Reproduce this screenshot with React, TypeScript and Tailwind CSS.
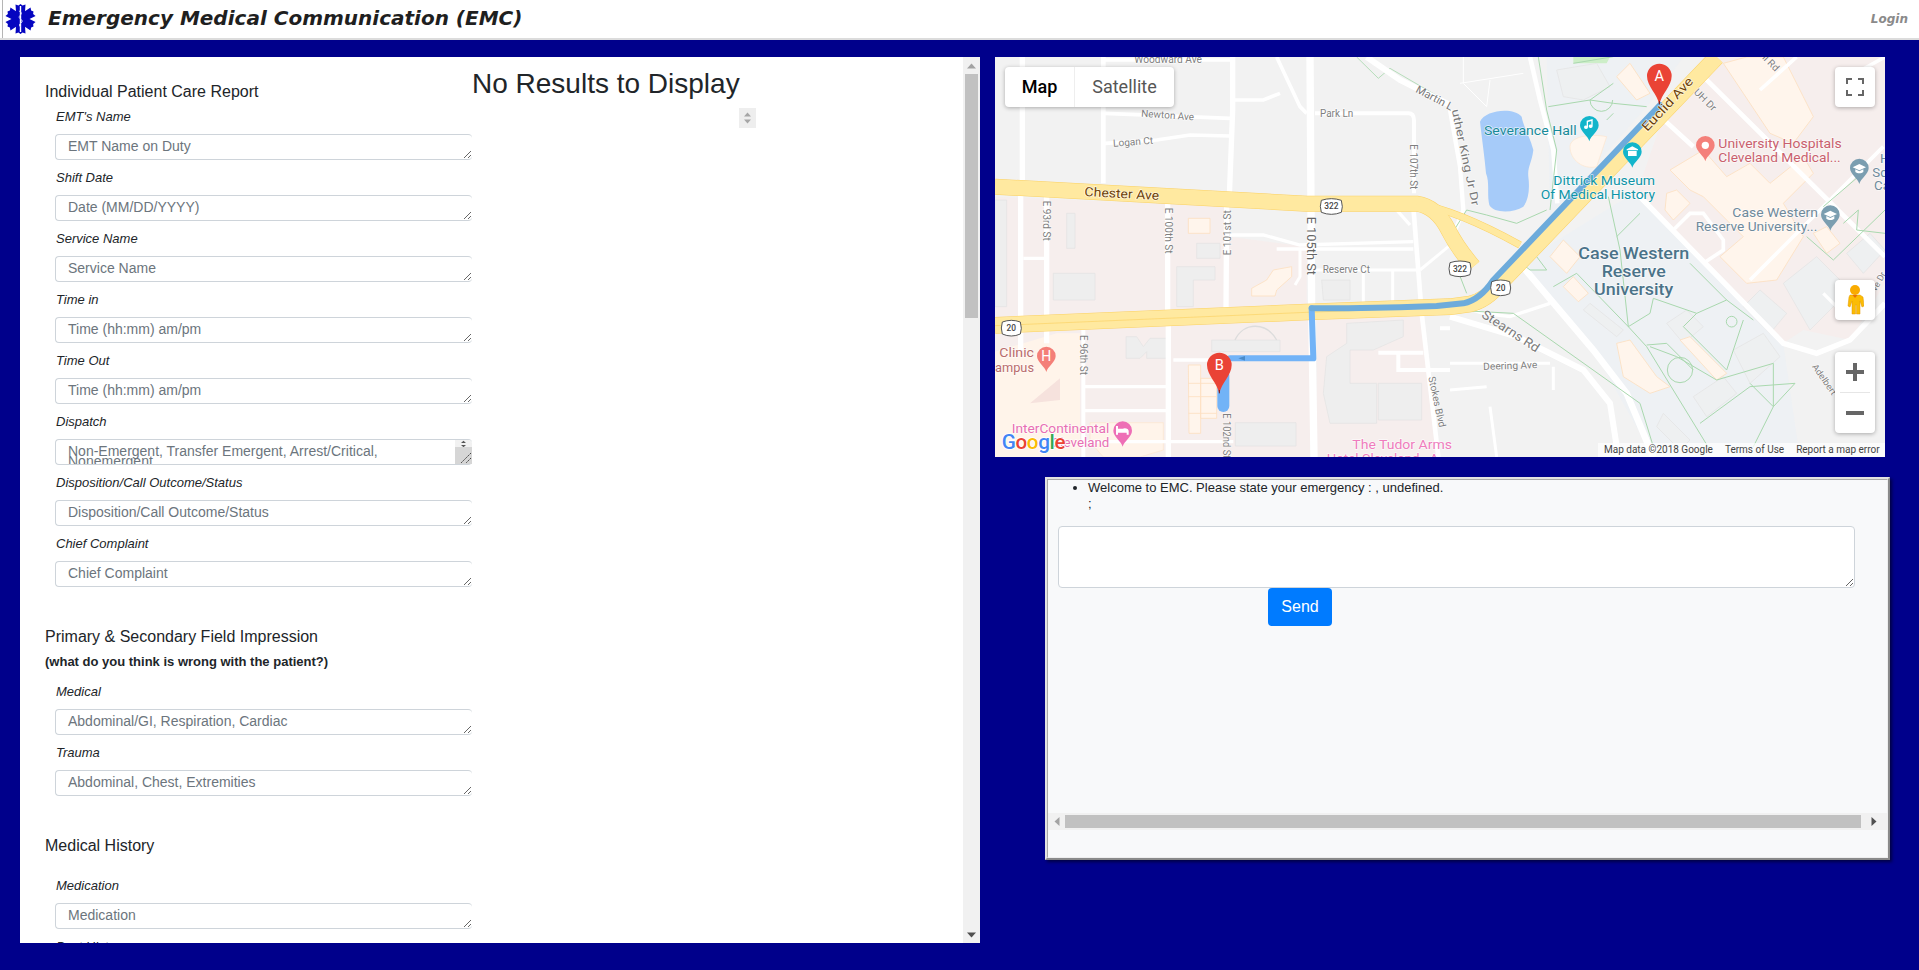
import type { ReactNode } from "react";

const fieldsTop = [
  { label: "EMT's Name", hint: "EMT Name on Duty" },
  { label: "Shift Date", hint: "Date (MM/DD/YYYY)" },
  { label: "Service Name", hint: "Service Name" },
  { label: "Time in", hint: "Time (hh:mm) am/pm" },
  { label: "Time Out", hint: "Time (hh:mm) am/pm" },
];

const fieldsBottom = [
  { label: "Disposition/Call Outcome/Status", hint: "Disposition/Call Outcome/Status" },
  { label: "Chief Complaint", hint: "Chief Complaint" },
];

function Label({ children }: { children: ReactNode }) {
  return <div className="h-[18px] mb-2 ml-px text-[13px] leading-[18px] italic text-[#212529]">{children}</div>;
}

function Field({ label, hint }: { label: string; hint: string }) {
  return (
    <div className="mb-[9px]">
      <Label>{label}</Label>
      <textarea
        rows={1}
        placeholder={hint}
        className="block w-[417px] h-[26px] py-1.5 px-3 text-sm leading-[10px] bg-white border border-r-0 border-[#ced4da] rounded placeholder:text-[#6c757d] outline-none"
      />
    </div>
  );
}

function DispatchField() {
  return (
    <div className="mb-[9px]">
      <Label>Dispatch</Label>
      <div className="relative w-[417px] h-[26px]">
        <textarea
          rows={1}
          placeholder={"Non-Emergent, Transfer Emergent, Arrest/Critical,\nNonemergent"}
          className="block w-full h-full py-1.5 px-3 text-sm leading-[10px] bg-white border border-r-0 border-[#ced4da] rounded placeholder:text-[#6c757d] outline-none overflow-hidden resize-none"
        />
        <div className="absolute right-0 top-px bottom-px w-[17px] flex flex-col bg-[#f1f1f1] rounded-r">
          <div className="h-[7px] text-center">
            <svg width="17" height="8" viewBox="0 0 17 8"><path d="M6 3 8.5 0.8 11 3zM6 5 8.5 7.2 11 5z" fill="#555" /></svg>
          </div>
          <div className="relative flex-1 bg-[#d6d6d6]">
            <svg className="absolute right-0 bottom-0" width="14" height="14" viewBox="0 0 14 14">
              <path d="M13 3 3 13M13 8 8 13" stroke="#444" strokeWidth="1" strokeDasharray="2 1" fill="none" />
            </svg>
          </div>
        </div>
      </div>
    </div>
  );
}

function StarOfLife() {
  return (
    <svg width="33" height="32" viewBox="0 0 32 32" className="shrink-0">
      {[0, 60, 120].map((a) => (
        <path key={a} transform={`rotate(${a} 16 16)`} d="M12 16 11 1.500 14 2.600 16 1 18 2.600 21 1.500 20 16 21 30.500 18 29.400 16 31 14 29.400 11 30.500z" fill="#0505c0" />
      ))}
      <path d="M16 3v26" stroke="#fff" strokeWidth="1.400" />
      <path d="M14.400 8c2.800 1 3 3 1.600 4s-2 3 0 4 2.200 3 .4 4-1.800 3-.2 4" stroke="#dfe3ff" strokeWidth="1" fill="none" />
    </svg>
  );
}

function Txt({ x, y, s = 30, c = "#7f7f7f", w = 400, r, a, t, len }: { x: number; y: number; s?: number; c?: string; w?: number; r?: number; a?: "middle" | "end"; t: string; len?: number }) {
  return (
    <text
      x={x}
      y={y}
      fontSize={s}
      fill={c}
      fontWeight={w}
      textAnchor={a}
      textLength={len}
      lengthAdjust={len ? "spacingAndGlyphs" : undefined}
      transform={r ? `rotate(${r} ${x} ${y})` : undefined}
      stroke="#ffffff"
      strokeOpacity={0.7}
      strokeWidth={4}
      paintOrder="stroke"
    >
      {t}
    </text>
  );
}

function Shield({ x, y, t }: { x: number; y: number; t: string }) {
  const half = t.length > 2 ? 30 : 27;
  return (
    <g>
      <path d={`M${x - half} ${y - 18}q${half} -10 ${half * 2} 0q6 20 0 36q-${half} 12 -${half * 2} 0q-6 -18 0 -36z`} fill="#fff" stroke="#555" strokeWidth="3" />
      <text x={x} y={y + 9} fontSize="25" fill="#444" textAnchor="middle" fontWeight={500}>{t}</text>
    </g>
  );
}

function Pin({ x, y, c, t }: { x: number; y: number; c: string; t: string }) {
  // x,y = centre of the head
  return (
    <g>
      <path d={`M${x} ${y + 85}C${x - 6} ${y + 55} ${x - 37} ${y + 30} ${x - 37} ${y}a37 37 0 0 1 74 0C${x + 37} ${y + 30} ${x + 6} ${y + 55} ${x} ${y + 85}z`} fill={c} />
      <path d={`M${x} ${y + 85}v-10`} stroke="#7a1a12" strokeWidth="3" />
      <text x={x} y={y + 16} fontSize="44" fill="#fff" textAnchor="middle">{t}</text>
    </g>
  );
}

function Poi({ x, y, c, glyph }: { x: number; y: number; c: string; glyph: ReactNode }) {
  return (
    <g>
      <path d={`M${x} ${y + 48}C${x - 4} ${y + 32} ${x - 28} ${y + 18} ${x - 28} ${y}a28 28 0 0 1 56 0C${x + 28} ${y + 18} ${x + 4} ${y + 32} ${x} ${y + 48}z`} fill={c} />
      {glyph}
    </g>
  );
}

const WHITE_ROADS: [string, number][] = [
  ["M97 21V390M92 430V900", 16],
  ["M340 21V400", 14],
  ["M728 21V180L718 440M710 470 708 780", 16],
  ["M170 440V880", 16],
  ["M533 450V780M535 800V1221", 16],
  ["M345 30H730M345 190 720 205M345 280 500 270 600 255 720 258", 11],
  ["M730 150H820L870 130M860 21 930 170 950 190", 11],
  ["M975 190H1255Q1272 190 1272 212V430", 12],
  ["M1270 470 1295 790 1345 1221", 14],
  ["M1130 21 1230 90 1380 165", 18],
  ["M100 625H165M720 555H820L930 585 1270 575M860 597H1270", 10],
  ["M930 600V680L915 705M975 660H1280M1120 660V760M1208 660V760M1290 660 1375 590", 9],
  ["M1165 908H1300M1225 908V960H1380M1350 835H1380", 12],
  ["M285 1010H530M285 1082H530M285 1175H730M550 930H660", 10],
  ["M280 840V1221", 12],
  ["M1220 480 1260 525", 10],
];

const RIGHT_ROADS: [string, number][] = [
  ["M240 21 270 150 310 300 322 460", 14],
  ["M0 180 30 350 40 480 0 580", 13],
  ["M210 640 430 900 530 1030 610 1221", 20],
  ["M0 760 100 790 180 800 300 760", 10],
  ["M0 800 200 860 400 960 480 1060 505 1221", 18],
  ["M560 430 1000 880 1100 910 1200 870 1305 760", 16],
  ["M760 80 1305 620M620 190 730 290", 14],
  ["M1040 21 930 120M1180 90 1305 21M1300 290 900 690", 11],
  ["M670 540 720 490H760L820 570V600L760 640", 11],
  ["M0 940 300 940M0 1020 110 1010M120 1070 140 1221M310 950V1020", 9],
  ["M40 21V100L110 170M30 100 220 70M110 170 120 90", 3],
  ["M1120 730 1180 790", 10],
];

const GREEN_LINES = [
  "M265 21 290 180 320 300 300 480M295 170 420 150 490 160 590 170M420 150a34 34 0 1 0 68 0M490 100 420 150M490 190 470 210M370 40 490 20",
  "M50 480 110 495 200 520 290 480M0 560 50 480M15 640 50 730",
  "M500 560 570 490M475 440 510 600 535 830 600 790 610 745 740 790 830 750 910 810M380 670 535 830 590 890 780 1200M740 790 700 830 830 960 880 810",
  "M590 885 650 880 730 960M600 890 680 920 800 990 970 940V1070L900 1000M970 1070 1035 1000 900 1010 750 1120M970 1070 910 1190M720 640 830 750",
  "M190 790 570 1060 610 1190M0 780 190 790",
  "M1120 470 1225 380M1070 560 1150 630 1305 480M1180 520 1225 480 1220 540 1305 550",
  "M260 620 290 660H240L215 640M310 710 380 670",
];

const GREY_BUILDINGS = [
  "M1070 820 1240 810V860L1150 900H1080V1000L1160 1000V1120H1020L1000 1030 1010 920 1070 880z",
  "M1165 1000H1295V1110H1165z",
  "M190 670H315V750H190z",
  "M560 650H675V690H610V770H560z",
  "M620 580H690V625H620z",
  "M230 490H255V595H230z",
  "M408 860H440L460 890 480 865H540V925H470V905L450 925H408z",
  "M665 870H870V905H665z",
  "M736 1118H918V1188H736z",
  "M995 690H1080V750H1000z",
];

const RIGHT_GREY = [
  "M1000 700 1100 620 1200 720 1080 840z",
  "M1190 610 1260 550 1305 600 1240 670z",
  "M930 720 1010 790 960 850 880 770z",
  "M850 900 940 850 990 920 900 1000z",
  "M420 760 520 840 500 860 400 780z",
  "M640 1090 720 1170 690 1200 620 1130z",
  "M730 1040 820 980 860 1030 770 1100z",
  "M650 820 710 780 760 830 700 880z",
  "M320 60 440 40 480 110 400 150 340 140z",
];

const RIGHT_PEACH = [
  "M660 360 760 300 830 380 900 340 960 400 1060 320 1090 370 1000 460 1060 560 980 690 890 700 810 620 880 560 760 440 720 420z",
  "M820 40 890 21H1000L1090 200 1030 280 960 250 880 130z",
  "M650 430 680 420 720 460 670 510 645 480z",
  "M500 80 540 40 600 130 560 150z",
  "M300 620 340 570 390 620 350 670z",
  "M340 710 370 680 415 730 385 755z",
  "M500 880 540 870 620 980 660 1010 600 1030 520 980z",
  "M690 870 720 860 830 970 800 990z",
  "M1090 550 1130 530 1170 580 1130 610z",
];

function MapDrawing() {
  return (
    <svg viewBox="15 21 2670 1200" width="890" height="400" className="block" fontFamily="Roboto, sans-serif">
      <rect x="15" y="21" width="2670" height="1200" fill="#f2f2f2" />

      {/* land use */}
      <path d="M15 440 720 470V560L950 590V770L15 820z" fill="#f6eeed" />
      <path d="M15 840 960 800V1221H15zM980 800 1290 790 1340 1221H980z" fill="#f6eeed" />
      <path d="M15 905 200 850H270V1221H15z" fill="#fff4ea" />
      <path d="M120 1060 210 985V1050z" fill="#f6e2dd" />
      <path d="M300 1118H520V1200L450 1221H340L300 1175z" fill="#fff4ea" stroke="#fde6cd" strokeWidth="2" />
      <g transform="translate(1380 0)">
        <path d="M290 21H700L590 170 300 500z" fill="#eef1f4" />
        <path d="M810 21H1305V700L1200 870 1000 880 560 430 650 170z" fill="#f6eeed" />
        <path d="M210 640 550 430 1000 880 1050 1221H610L430 900z" fill="#eef1f4" />
        <path d="M1000 880 1060 840 1200 870 1305 760V1221H1050z" fill="#f2f2f2" />
        <path d="M370 21H480L470 40 370 40z" fill="#cdeec8" />
        <path d="M360 290C360 260 420 250 470 260L440 350C400 360 360 330 360 290z" fill="#fff6ee" stroke="#fde6cd" strokeWidth="2" />
        {RIGHT_GREY.map((d) => <path key={d} d={d} fill="#eef0f1" stroke="#e2e2e2" strokeWidth="2" />)}
        {RIGHT_PEACH.map((d) => <path key={d} d={d} fill="#fff5ec" stroke="#fde0c0" strokeWidth="2.500" />)}
        <path d="M90 215C105 180 190 170 215 200 220 230 240 260 250 300 245 340 232 350 235 380 240 420 235 450 220 470 190 490 130 490 118 465 110 430 120 400 108 370 105 330 95 260 90 215z" fill="#a6cbf9" />
        {RIGHT_ROADS.map(([d, w]) => <path key={d} d={d} fill="none" stroke="#fff" strokeWidth={w} />)}
        {GREEN_LINES.map((d) => <path key={d} d={d} fill="none" stroke="#a9d8ae" strokeWidth="3" />)}
        <circle cx="845" cy="815" r="16" fill="none" stroke="#a9d8ae" strokeWidth="3" />
        <circle cx="690" cy="960" r="38" fill="none" stroke="#a9d8ae" strokeWidth="3" />
      </g>

      {GREY_BUILDINGS.map((d) => <path key={d} d={d} fill="#eeeeee" stroke="#e2e2e2" strokeWidth="2" />)}
      <path d="M15 450H50V770H15z" fill="#eeeeee" stroke="#e2e2e2" strokeWidth="2" />
      <path d="M1100 21 1165 85 1200 55 1380 160" fill="none" stroke="#a9d8ae" strokeWidth="2.500" />
      <path d="M735 870C760 815 830 815 860 870" fill="none" stroke="#dcdcdc" strokeWidth="4" />

      {/* peach buildings */}
      <path d="M595 505H660V550H595z" fill="#fff5ec" stroke="#fde0c0" strokeWidth="2.500" />
      <path d="M785 715 830 690 850 660 905 650V680L860 720 855 738H785z" fill="#fff5ec" stroke="#fde0c0" strokeWidth="2.500" />
      <path d="M595 945H632V1150H597zM632 985H680V1105H632zM595 1000H680M595 1040H680M595 1090H680" fill="#fff5ec" stroke="#fde0c0" strokeWidth="2.500" />

      {WHITE_ROADS.map(([d, w]) => <path key={d} d={d} fill="none" stroke="#fff" strokeWidth={w} />)}
      <path d="M960 21 965 780 972 1221" fill="none" stroke="#fff" strokeWidth="22" />

      {/* highways */}
      <g fill="none" strokeLinejoin="round">
        <path d="M15 410 950 461 1280 461Q1340 470 1375 540 1400 590 1450 650" stroke="#fbd164" strokeWidth="48" />
        <path d="M1280 461Q1400 480 1590 585" stroke="#fbd164" strokeWidth="22" />
        <path d="M15 826 950 786 1380 770 1440 762Q1490 750 1530 700L2180 21" stroke="#fbd164" strokeWidth="50" />
        <path d="M15 410 950 461 1280 461Q1340 470 1375 540 1400 590 1450 650" stroke="#ffe9a0" strokeWidth="45" />
        <path d="M1280 461Q1400 480 1590 585" stroke="#ffe9a0" strokeWidth="19" />
        <path d="M15 826 950 786 1380 770 1440 762Q1490 750 1530 700L2180 21" stroke="#ffe9a0" strokeWidth="47" />
        <path d="M15 827 950 787 1380 771" stroke="#fbd164" strokeWidth="2" />
      </g>

      {/* route */}
      <g fill="none" strokeLinejoin="round" strokeLinecap="round">
        <path d="M965 775 970 925H720" stroke="#72b3f7" strokeWidth="18" />
        <path d="M700 975V1068" stroke="#72b3f7" strokeWidth="36" />
        <path d="M965 775H1075L1230 772 1340 768 1420 760Q1470 750 1510 690L2010 165" stroke="#6dabdb" strokeWidth="18" />
      </g>
      <path d="M745 925 765 918V932z" fill="#4a8bc9" />

      {/* labels, left half */}
      <Txt x={433} y={40} len={203} t="Woodward Ave" />
      <Txt x={453} y={200} r={4} len={159} t="Newton Ave" />
      <Txt x={370} y={290} r={-4} len={120} t="Logan Ct" />
      <Txt x={990} y={202} len={100} t="Park Ln" />
      <Txt x={283} y={438} r={3} s={38} c="#6d3f06" len={224} t="Chester Ave" />
      <Txt x={160} y={452} r={90} len={120} t="E 93rd St" />
      <Txt x={524} y={473} r={90} len={138} t="E 100th St" />
      <Txt x={722} y={616} r={-90} len={135} t="E 101st St" />
      <Txt x={950} y={500} r={90} s={38} c="#666" len={175} t="E 105th St" />
      <Txt x={1261} y={283} r={90} len={135} t="E 107th St" />
      <Txt x={998} y={670} len={142} t="Reserve Ct" />
      <Txt x={271} y={855} r={90} len={120} t="E 96th St" />
      <Txt x={699} y={1090} r={90} len={135} t="E 102nd St" />
      <Txt x={1315} y={982} r={78} len={155} t="Stokes Blvd" />
      <Txt x={1275} y={125} r={28} s={33} c="#777" t="Martin L" />
      <Txt x={1385} y={180} r={78} s={33} c="#777" len={295} t="uther King Jr Dr" />
      <Txt x={28} y={922} s={40} c="#b96c6c" len={104} t="Clinic" />
      <Txt x={15} y={965} s={40} c="#b96c6c" len={117} t="ampus" />
      <Txt x={65} y={1148} s={40} c="#e86fb4" len={293} t="InterContinental" />
      <Txt x={358} y={1190} s={40} c="#e86fb4" a="end" t="Cleveland" />
      <Txt x={1087} y={1196} s={40} c="#ef7cbd" len={299} t="The Tudor Arms" />
      <Txt x={1010} y={1238} s={40} c="#ef7cbd" t="Hotel Cleveland - A" />

      <Poi x={169} y={918} c="#f47f78" glyph={<text x={169} y={933} fontSize="42" fill="#fff" textAnchor="middle">H</text>} />
      <Poi x={398} y={1142} c="#ee6fb6" glyph={<path d="M378 1128h6v8h14a12 9 0 0 1 18 6v12h-6v-6h-26v6h-6z" fill="#fff" />} />

      <g transform="translate(1380 0)">
        <Txt x={102} y={254} s={40} c="#188a99" len={278} t="Severance Hall" />
        <Txt x={310} y={404} s={40} c="#0f95a8" len={305} t="Dittrick Museum" />
        <Txt x={272} y={446} s={40} c="#0f95a8" len={343} t="Of Medical History" />
        <Txt x={805} y={294} s={40} c="#c9606d" len={370} t="University Hospitals" />
        <Txt x={805} y={336} s={40} c="#c9606d" len={367} t="Cleveland Medical..." />
        <Txt x={847} y={501} s={40} c="#6f8a9b" len={257} t="Case Western" />
        <Txt x={737} y={543} s={40} c="#6f8a9b" len={365} t="Reserve University..." />
        <Txt x={385} y={626} s={52} w={500} c="#4b7389" len={333} t="Case Western" />
        <Txt x={455} y={680} s={52} w={500} c="#4b7389" len={192} t="Reserve" />
        <Txt x={432} y={734} s={52} w={500} c="#4b7389" len={238} t="University" />
        <Txt x={592} y={246} r={-47} s={38} c="#6d3f06" len={205} t="Euclid Ave" />
        <Txt x={730} y={128} r={45} len={81} t="UH Dr" />
        <Txt x={92} y={800} r={33} s={38} c="#7c7c7c" len={198} t="Stearns Rd" />
        <Txt x={100} y={960} r={-2} len={162} t="Deering Ave" />
        <Txt x={1085} y={950} r={55} s={27} len={107} t="Adelbert" />
        <Txt x={935} y={25} r={45} t="ll Rd" />
        <Txt x={1278} y={725} r={-60} s={27} t="ve Dr" />
        <Txt x={1290} y={338} s={40} c="#6f8a9b" t="H" />
        <Txt x={1267} y={380} s={40} c="#6f8a9b" t="Sc" />
        <Txt x={1272} y={421} s={40} c="#6f8a9b" t="Ca" />
        <Poi x={418} y={226} c="#12b5cb" glyph={<path d="M410 212l18-5v22a6 5 0 1 1-4-5v-11l-10 3v16a6 5 0 1 1-4-5z" fill="#fff" />} />
        <Poi x={547} y={305} c="#12b5cb" glyph={<path d="M530 298l17-9 17 9v3h-34zM534 303h26v15h-26z" fill="#fff" />} />
        <Poi x={766} y={286} c="#f4807a" glyph={<circle cx={766} cy={286} r={11} fill="#fff" />} />
        <Poi x={1228} y={354} c="#7b9eb0" glyph={<path d="M1208 352l20-10 20 10-20 9zM1216 358v8c6 5 18 5 24 0v-8l-12 6z" fill="#fff" />} />
        <Poi x={1141} y={494} c="#7b9eb0" glyph={<path d="M1121 492l20-10 20 10-20 9zM1129 498v8c6 5 18 5 24 0v-8l-12 6z" fill="#fff" />} />
        <Pin x={628} y={78} c="#ea4335" t="A" />
        <Shield x={30} y={656} t="322" />
        <Shield x={152} y={713} t="20" />
      </g>

      <Shield x={1024} y={469} t="322" />
      <Shield x={64} y={834} t="20" />
      <Pin x={688} y={945} c="#ea4335" t="B" />

      <text x={35} y={1197} fontSize="62" fontWeight={500} stroke="#fff" strokeWidth="5" paintOrder="stroke" letterSpacing="-1">
        <tspan fill="#4285f4">G</tspan>
        <tspan fill="#ea4335">o</tspan>
        <tspan fill="#fbbc05">o</tspan>
        <tspan fill="#4285f4">g</tspan>
        <tspan fill="#34a853">l</tspan>
        <tspan fill="#ea4335">e</tspan>
      </text>
    </svg>
  );
}

function MapCard() {
  return (
    <div className="relative w-[890px] h-[400px] overflow-hidden font-['Roboto',sans-serif]">
      <MapDrawing />
      <div className="absolute left-2.5 top-2.5 flex h-10 bg-white rounded-sm shadow-[0_1px_4px_rgba(0,0,0,0.3)] text-lg">
        <div className="w-[70px] flex items-center justify-center font-medium text-black border-r border-[#eee]">Map</div>
        <div className="w-[99px] flex items-center justify-center text-[#565656]">Satellite</div>
      </div>
      <div className="absolute right-2.5 top-2.5 w-10 h-10 bg-white rounded-sm shadow-[0_1px_4px_rgba(0,0,0,0.3)] flex items-center justify-center">
        <svg width="18" height="18" viewBox="0 0 18 18">
          <path d="M0 6V0h6v2H2v4zM12 0h6v6h-2V2h-4zM18 12v6h-6v-2h4v-4zM6 18H0v-6h2v4h4z" fill="#666" />
        </svg>
      </div>
      <div className="absolute right-2.5 top-[223px] w-10 h-10 bg-white rounded-sm shadow-[0_1px_4px_rgba(0,0,0,0.3)] flex items-center justify-center">
        <svg width="18" height="30" viewBox="0 0 18 30">
          <circle cx="9" cy="5" r="5" fill="#f9ab00" />
          <path d="M4 10h10l3 2 1 9-2 1-2-6v13h-3.500v-9h-1v9H6V16l-2 6-2-1 1-9z" fill="#fbbc04" stroke="#e09600" strokeWidth="0.500" />
          <path d="M6.500 10 9 13l2.500-3z" fill="#e8710a" />
        </svg>
      </div>
      <div className="absolute right-2.5 top-[295px] w-10 h-[81px] bg-white rounded-sm shadow-[0_1px_4px_rgba(0,0,0,0.3)] flex flex-col items-center">
        <div className="h-10 w-full flex items-center justify-center">
          <svg width="18" height="18" viewBox="0 0 18 18"><path d="M7 0h4v7h7v4h-7v7H7v-7H0V7h7z" fill="#666" /></svg>
        </div>
        <div className="w-[30px] h-px bg-[#e6e6e6]" />
        <div className="h-10 w-full flex items-center justify-center">
          <svg width="18" height="18" viewBox="0 0 18 18"><path d="M0 7h18v4H0z" fill="#666" /></svg>
        </div>
      </div>
      <div className="absolute right-0 bottom-0 h-[14px] w-[287px] pl-1.5 flex items-center gap-3 bg-white/70 text-[10px] leading-[14px] text-[#444]">
        <span>Map data ©2018 Google</span>
        <span>Terms of Use</span>
        <span>Report a map error</span>
      </div>
    </div>
  );
}

function FormPanel() {
  return (
    <div className="flex w-[960px] h-[886px] bg-white overflow-hidden">
      <div className="w-[452px] shrink-0 pt-[23px] pl-[25px] overflow-hidden">
        <h4 className="h-6 mb-1 text-base leading-6 text-[#212529]">Individual Patient Care Report</h4>
        <div className="pl-2.5">
          {fieldsTop.map((f) => <Field key={f.label} {...f} />)}
          <DispatchField />
          {fieldsBottom.map((f) => <Field key={f.label} {...f} />)}
        </div>
        <h4 className="h-6 mt-[38px] text-base leading-6 text-[#212529]">Primary &amp; Secondary Field Impression</h4>
        <p className="h-5 mt-[3px] mb-[11px] text-[13px] leading-5 font-bold text-[#212529]">(what do you think is wrong with the patient?)</p>
        <div className="pl-2.5">
          <Field label="Medical" hint="Abdominal/GI, Respiration, Cardiac" />
          <Field label="Trauma" hint="Abdominal, Chest, Extremities" />
        </div>
        <h4 className="h-6 mt-[38px] mb-[19px] text-base leading-6 text-[#212529]">Medical History</h4>
        <div className="pl-2.5">
          <Field label="Medication" hint="Medication" />
          <Field label="Past History" hint="Past History" />
        </div>
      </div>
      <div className="flex-1 pt-2.5">
        <h2 className="text-[28px] leading-[34px] text-[#212529]">No Results to Display</h2>
        <div className="w-[17px] h-5 ml-[267px] mt-[7px] bg-[#eeeeee] flex items-center justify-center">
          <svg width="9" height="14" viewBox="0 0 9 14"><path d="M1 5.500 4.500 1.500 8 5.500zM1 8.500H8L4.500 12.500z" fill="#a6a6a6" /></svg>
        </div>
      </div>
      <div className="w-[17px] shrink-0 flex flex-col items-center bg-[#f1f1f1]">
        <div className="h-[17px] flex items-center">
          <svg width="9" height="6" viewBox="0 0 9 6"><path d="M0 5.500 4.500 0.500 9 5.500z" fill="#a3a3a3" /></svg>
        </div>
        <div className="w-[13px] h-[244px] bg-[#c1c1c1]" />
        <div className="mt-auto h-[17px] flex items-center">
          <svg width="9" height="6" viewBox="0 0 9 6"><path d="M0 0.500H9L4.500 5.500z" fill="#505050" /></svg>
        </div>
      </div>
    </div>
  );
}

function ChatPanel() {
  return (
    <div className="ml-[50px] mt-5 w-[845px] h-[383px] border-2 border-t-[#e2e2e2] border-l-[#e2e2e2] border-r-[#8a8a8a] border-b-[#8a8a8a] shadow-[2px_2px_3px_rgba(0,0,0,0.5)]">
      <div className="h-full flex flex-col bg-[#f8f9fa] border border-t-[#a8a8a8] border-l-[#a8a8a8] border-r-[#eeeeee] border-b-[#eeeeee]">
        <ul className="list-disc pl-10 text-[13px] leading-4 text-[#212529]">
          <li>
            Welcome to EMC. Please state your emergency : , undefined.
            <br />;
          </li>
        </ul>
        <textarea className="block ml-2.5 mt-[14px] w-[797px] h-[62px] shrink-0 bg-white border border-[#ced4da] rounded outline-none" />
        <button className="ml-[220px] w-16 h-[38px] shrink-0 bg-[#007bff] text-white text-base rounded">Send</button>
        <div className="mt-auto mb-[27px] h-[17px] flex items-center bg-[#f1f1f1]">
          <div className="w-[17px] flex justify-center">
            <svg width="6" height="9" viewBox="0 0 6 9"><path d="M5.500 0 0.500 4.500 5.500 9z" fill="#a3a3a3" /></svg>
          </div>
          <div className="flex-1 h-[13px] bg-[#c1c1c1]" />
          <div className="w-[26px] flex justify-center">
            <svg width="6" height="9" viewBox="0 0 6 9"><path d="M0.500 0 5.500 4.500 0.500 9z" fill="#505050" /></svg>
          </div>
        </div>
      </div>
    </div>
  );
}

export default function App() {
  return (
    <div className="min-h-[970px] bg-[#00008b] font-['Liberation_Sans',Arial,sans-serif] overflow-hidden">
      <header className="h-10 flex items-center bg-white border-b-2 border-[#dcdcdc] pl-0.5 pr-[11px]">
        <div className="w-px self-stretch bg-[#b5b5b5] mr-px" />
        <StarOfLife />
        <h1 className="ml-[11px] mb-[3px] font-['DejaVu_Sans',sans-serif] text-[20px] font-bold italic text-[#1f1f1f]">Emergency Medical Communication (EMC)</h1>
        <span className="ml-auto font-['DejaVu_Sans',sans-serif] text-[12px] font-bold italic text-[#8a8a8a]">Login</span>
      </header>
      <div className="flex items-start pt-[17px] pl-5">
        <FormPanel />
        <div className="ml-[15px]">
          <MapCard />
          <ChatPanel />
        </div>
      </div>
    </div>
  );
}
